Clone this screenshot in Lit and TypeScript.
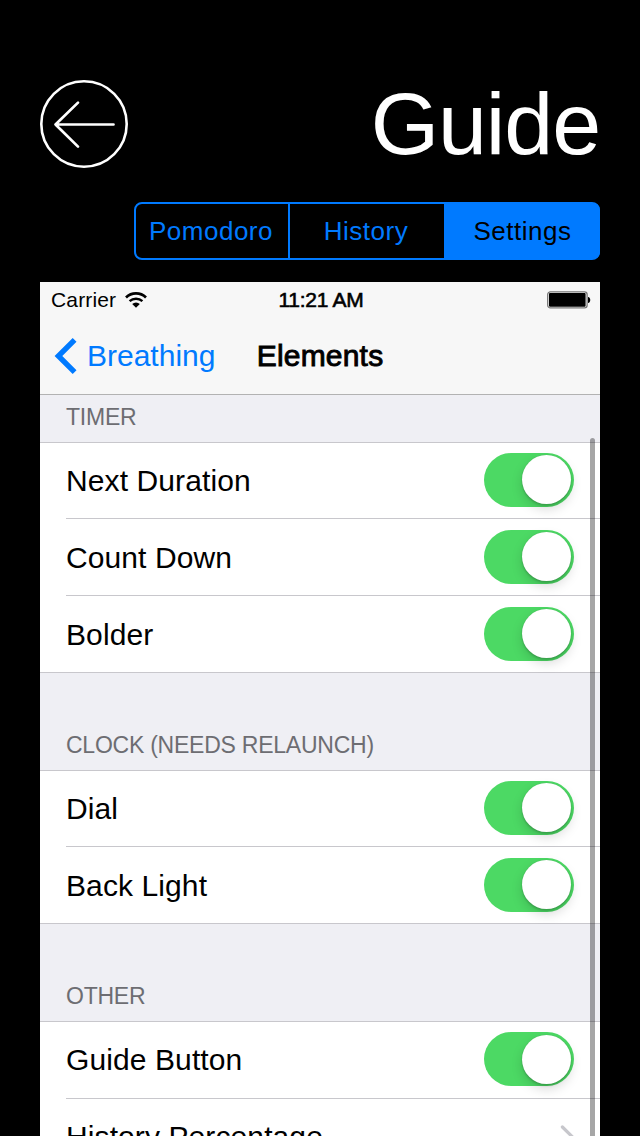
import { LitElement, html, css } from "lit";
import { customElement, property } from "lit/decorators.js";
import { classMap } from "lit/directives/class-map.js";

interface Row {
  label: string;
  kind: "switch" | "link";
  tall?: boolean;
  low?: boolean;
}

interface Section {
  title: string;
  rows: Row[];
}

const SECTIONS: Section[] = [
  {
    title: "TIMER",
    rows: [
      { label: "Next Duration", kind: "switch" },
      { label: "Count Down", kind: "switch", tall: true, low: true },
      { label: "Bolder", kind: "switch", tall: true, low: true },
    ],
  },
  {
    title: "CLOCK (NEEDS RELAUNCH)",
    rows: [
      { label: "Dial", kind: "switch" },
      { label: "Back Light", kind: "switch", tall: true, low: true },
    ],
  },
  {
    title: "OTHER",
    rows: [
      { label: "Guide Button", kind: "switch", tall: true },
      { label: "History Percentage", kind: "link", tall: true },
    ],
  },
];

@customElement("ios-switch")
export class IosSwitch extends LitElement {
  static styles = css`
    :host {
      display: block;
      width: 90px;
      height: 54px;
      flex: none;
    }
    .track {
      box-sizing: border-box;
      display: flex;
      justify-content: flex-end;
      align-items: center;
      width: 90px;
      height: 54px;
      padding-right: 3px;
      border-radius: 27px;
      background: #4cd964;
    }
    .knob {
      width: 49px;
      height: 49px;
      border-radius: 50%;
      background: #fff;
      box-shadow: 0 5px 12px rgba(0, 0, 0, 0.15), 0 2px 2px rgba(0, 0, 0, 0.14),
        0 0 1px rgba(0, 0, 0, 0.2);
    }
  `;
  render() {
    return html`<div class="track"><div class="knob"></div></div>`;
  }
}

@customElement("settings-section")
export class SettingsSection extends LitElement {
  @property({ attribute: false }) section!: Section;
  @property({ type: Boolean }) first = false;

  static styles = css`
    :host {
      display: block;
    }
    .heading {
      box-sizing: border-box;
      height: 98px;
      padding: 58px 0 0 26px;
      border-bottom: 1px solid #c8c7cc;
      background: #efeff4;
      color: #6d6d72;
      font-size: 23px;
      line-height: 28px;
      letter-spacing: -0.24px;
      white-space: nowrap;
    }
    .heading.first {
      height: 48px;
      padding-top: 8px;
    }
    .rows {
      background: #fff;
      border-bottom: 1px solid #c8c7cc;
    }
    .row {
      box-sizing: border-box;
      display: flex;
      align-items: center;
      justify-content: space-between;
      height: 76px;
      margin-left: 26px;
      padding-right: 26px;
      border-bottom: 1px solid #c8c7cc;
      font-size: 30px;
      letter-spacing: 0.1px;
      color: #000;
      white-space: nowrap;
    }
    .row.tall {
      height: 77px;
    }
    .row:last-child {
      border-bottom: 0;
      height: 76px;
    }
    .low .label {
      padding-top: 2px;
    }
    .switch {
      margin-bottom: 2px;
    }
    .low .switch {
      margin-bottom: 1px;
    }
    .chevron {
      width: 16px;
      height: 26px;
      margin-right: -2px;
    }
  `;
  render() {
    return html`
      <div class=${classMap({ heading: true, first: this.first })}>${this.section.title}</div>
      <div class="rows">
        ${this.section.rows.map(
          (r) => html`<div class=${classMap({ row: true, tall: !!r.tall, low: !!r.low })}>
            <span class="label">${r.label}</span>
            ${r.kind === "switch"
              ? html`<ios-switch class="switch"></ios-switch>`
              : html`<svg class="chevron" viewBox="0 0 16 26">
                  <path d="M2.4 3 L12.5 13 L2.4 23" fill="none" stroke="#c7c7cc" stroke-width="3.2" stroke-linecap="round" />
                </svg>`}
          </div>`
        )}
      </div>
    `;
  }
}

@customElement("app-root")
export class AppRoot extends LitElement {
  static styles = css`
    :host {
      display: block;
      width: 640px;
      height: 1136px;
      overflow: hidden;
      background: #000;
      font-family: "Liberation Sans", Arial, sans-serif;
    }
    .page {
      box-sizing: border-box;
      display: flex;
      flex-direction: column;
      height: 1136px;
      padding: 80px 40px 0;
    }
    .top {
      display: flex;
      justify-content: space-between;
      height: 88px;
    }
    .back {
      width: 88px;
      height: 88px;
    }
    .title {
      margin: 0;
      font-size: 88px;
      font-weight: 400;
      line-height: 88px;
      letter-spacing: -1.1px;
      color: #fff;
    }
    .tabs {
      box-sizing: border-box;
      display: flex;
      align-self: flex-end;
      width: 466px;
      height: 58px;
      margin: 34px 0 22px;
      border: 2px solid #007aff;
      border-radius: 8px;
      flex: none;
    }
    .tab {
      box-sizing: border-box;
      width: 154px;
      padding-right: 2px;
      text-align: center;
      font-size: 26px;
      line-height: 55px;
      letter-spacing: 0.5px;
      color: #007aff;
    }
    .tab:first-child {
      border-right: 2px solid #007aff;
    }
    .tab.on {
      background: #007aff;
      color: #000;
      border-radius: 0 6px 6px 0;
      box-shadow: 1px 0 0 1px #007aff;
      padding: 0 0 0 3px;
    }
    .phone {
      position: relative;
      flex: 1;
      min-height: 0;
      overflow: hidden;
      background: #efeff4;
    }
    .bar {
      box-sizing: border-box;
      height: 113px;
      background: #f7f7f7;
      border-bottom: 1px solid #b2b2b2;
    }
    .status,
    .nav {
      display: grid;
      grid-template-columns: 1fr auto 1fr;
      align-items: center;
      white-space: nowrap;
    }
    .status {
      height: 36px;
      padding: 0 9px 0 11px;
      font-size: 21px;
      line-height: 36px;
      letter-spacing: 0.15px;
      color: #000;
    }
    .carrier {
      display: flex;
      align-items: center;
      gap: 9px;
    }
    .wifi {
      width: 22px;
      height: 16px;
    }
    .clock {
      letter-spacing: -0.25px;
      -webkit-text-stroke: 0.6px #000;
    }
    .battery {
      justify-self: end;
      width: 44px;
      height: 18px;
    }
    .nav {
      height: 76px;
      padding: 0 14px;
      font-size: 30px;
    }
    .crumb {
      display: flex;
      align-items: center;
      gap: 9px;
      color: #007aff;
    }
    .arrow {
      width: 24px;
      height: 38px;
    }
    .heading {
      color: #000;
      letter-spacing: 0.2px;
      -webkit-text-stroke: 0.9px #000;
    }
    .thumb {
      position: absolute;
      left: 550px;
      top: 156px;
      width: 5px;
      height: 720px;
      border-radius: 3px;
      background: rgba(0, 0, 0, 0.35);
    }
  `;

  render() {
    return html`
      <div class="page">
        <header class="top">
          <svg class="back" viewBox="0 0 88 88" fill="none" stroke="#fff">
            <circle cx="44" cy="44" r="42.7" stroke-width="2.6" />
            <path d="M38 22.6 L15.5 44.5 L38 66.6 M15.5 44.5 H73.5" stroke-width="2.7" stroke-linecap="round" stroke-linejoin="round" />
          </svg>
          <h1 class="title">Guide</h1>
        </header>
        <nav class="tabs">
          <div class="tab">Pomodoro</div>
          <div class="tab">History</div>
          <div class="tab on">Settings</div>
        </nav>
        <main class="phone">
          <div class="bar">
            <div class="status">
              <div class="carrier">
                <span>Carrier</span>
                <svg class="wifi" viewBox="0 0 22 16">
                  <path d="M1 5.4 A14.5 14.5 0 0 1 21 5.4" fill="none" stroke="#000" stroke-width="2.7" />
                  <path d="M4.6 9.2 A9.4 9.4 0 0 1 17.4 9.2" fill="none" stroke="#000" stroke-width="2.4" />
                  <path d="M7.2 12 A5.4 5.4 0 0 1 14.8 12 L11 15.8 Z" fill="#000" />
                </svg>
              </div>
              <span class="clock">11:21 AM</span>
              <svg class="battery" viewBox="0 0 44 18">
                <rect x="0.7" y="0.9" width="39.4" height="16" rx="2.6" fill="#fff" stroke="#777" stroke-width="1.3" />
                <rect x="2" y="2" width="36.6" height="13.8" rx="1" fill="#000" />
                <path d="M41 6 C44 6.4 44 11.6 41 12 Z" fill="#000" />
              </svg>
            </div>
            <div class="nav">
              <div class="crumb">
                <svg class="arrow" viewBox="0 0 24 38">
                  <path d="M20.6 2.8 L4.4 19 L20.6 35.2" fill="none" stroke="#007aff" stroke-width="5.4" />
                </svg>
                <span>Breathing</span>
              </div>
              <span class="heading">Elements</span>
            </div>
          </div>
          ${SECTIONS.map(
            (s, i) => html`<settings-section .section=${s} ?first=${i === 0}></settings-section>`
          )}
          <div class="thumb"></div>
        </main>
      </div>
    `;
  }
}
